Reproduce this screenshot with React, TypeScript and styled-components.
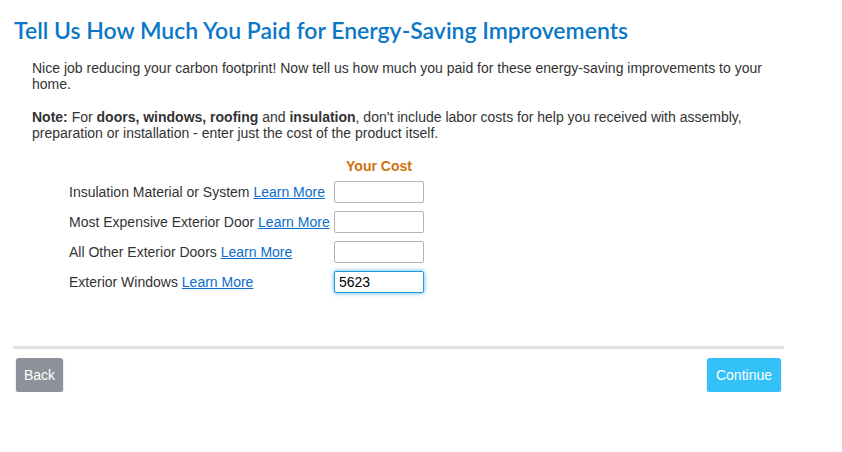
import React, { useState } from "react";
import styled, { createGlobalStyle } from "styled-components";

const GlobalStyle = createGlobalStyle`
  body {
    margin: 0;
    background: #fff;
    font-family: "Liberation Sans", Arial, sans-serif;
  }
`;

export const Page = styled.div`
  width: 771px;
  padding: 14px 0 0 13px;
`;

export const Title = styled.h1`
  margin: 0 0 0 1px;
  font-family: Lato, "Open Sans", sans-serif;
  font-size: 23px;
  font-weight: 600;
  line-height: 32px;
  color: #0b77c8;
`;

export const Body = styled.div`
  padding: 14px 0 0 19px;
`;

export const Para = styled.p`
  margin: 0 0 17px;
  font-size: 14px;
  line-height: 16px;
  color: #333;
`;

export const CostGrid = styled.div`
  display: grid;
  grid-template-columns: 265px 90px;
  row-gap: 8px;
  margin: 16px 0 0 56px;
  align-items: center;
`;

export const ColHead = styled.div`
  grid-column: 2;
  text-align: center;
  font-size: 14px;
  font-weight: bold;
  color: #d0700c;
  line-height: 16px;
  margin-bottom: -1px;
`;

export const Label = styled.div`
  font-size: 14px;
  color: #333;
  grid-column: 1;
`;

export const LearnMore = styled.a`
  color: #0b6ccc;
  text-decoration: underline;
  cursor: pointer;
`;

export const CostInput = styled.input<{ $focused?: boolean }>`
  box-sizing: border-box;
  width: 90px;
  height: 22px;
  padding: 1px 4px;
  font-family: "Liberation Sans", Arial, sans-serif;
  font-size: 14px;
  color: #000;
  border: 1px solid ${(p) => (p.$focused ? "#1e9be0" : "#b4b4b4")};
  border-radius: 2px;
  box-shadow: ${(p) => (p.$focused ? "0 0 4px rgba(30,155,224,0.8)" : "none")};
  outline: none;
`;

export const Footer = styled.div`
  margin-top: 53px;
  border-top: 3px solid #e1e1e1;
  padding: 9px 3px 0 3px;
  display: flex;
  justify-content: space-between;
`;

export const Button = styled.button<{ $primary?: boolean }>`
  height: 34px;
  padding: 0 ${(p) => (p.$primary ? "9px" : "8px")};
  border: none;
  border-radius: 3px;
  font-family: "Liberation Sans", Arial, sans-serif;
  font-size: 14px;
  color: #fff;
  background: ${(p) => (p.$primary ? "#33c1f8" : "#8d9199")};
  box-shadow: 0 2px 2px rgba(0, 0, 0, 0.25);
  cursor: pointer;
`;

const rows = [
  { label: "Insulation Material or System", value: "" },
  { label: "Most Expensive Exterior Door", value: "" },
  { label: "All Other Exterior Doors", value: "" },
  { label: "Exterior Windows", value: "5623" },
];

function App() {
  const [values, setValues] = useState(rows.map((r) => r.value));

  return (
    <Page>
      <GlobalStyle />
      <Title>Tell Us How Much You Paid for Energy-Saving Improvements</Title>
      <Body>
        <Para>
          Nice job reducing your carbon footprint! Now tell us how much you paid
          for these energy-saving improvements to your home.
        </Para>
        <Para>
          <b>Note:</b> For <b>doors, windows, roofing</b> and <b>insulation</b>,
          don't include labor costs for help you received with assembly,
          preparation or installation - enter just the cost of the product
          itself.
        </Para>
      </Body>
      <CostGrid>
        <ColHead>Your Cost</ColHead>
        {rows.map((row, i) => (
          <React.Fragment key={row.label}>
            <Label>
              {row.label} <LearnMore>Learn More</LearnMore>
            </Label>
            <CostInput
              $focused={i === rows.length - 1}
              value={values[i]}
              onChange={(e) => {
                const next = [...values];
                next[i] = e.target.value;
                setValues(next);
              }}
            />
          </React.Fragment>
        ))}
      </CostGrid>
      <Footer>
        <Button>Back</Button>
        <Button $primary>Continue</Button>
      </Footer>
    </Page>
  );
}

export default App;
